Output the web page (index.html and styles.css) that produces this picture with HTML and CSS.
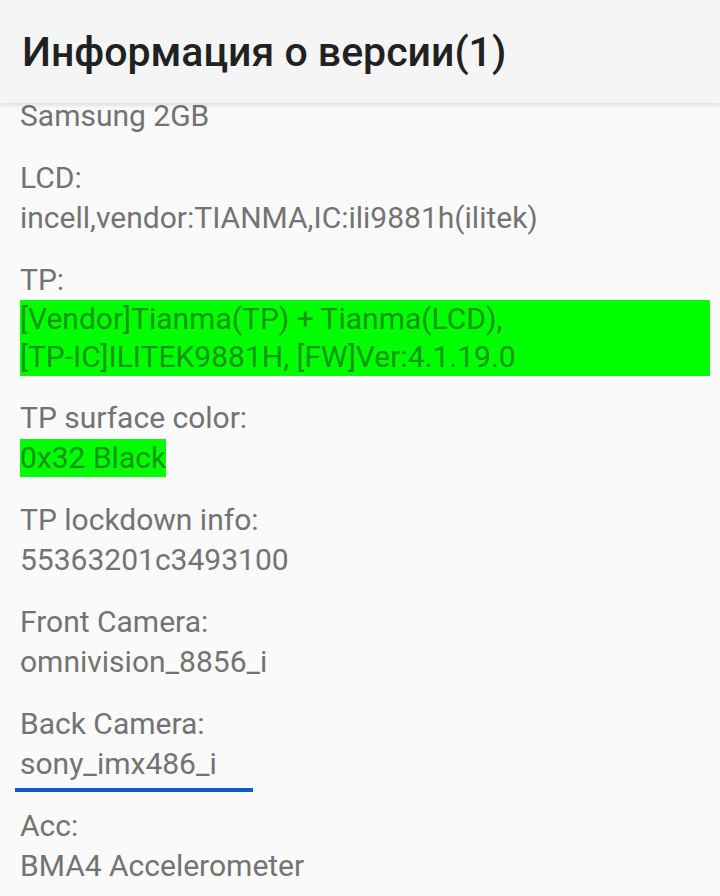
FILE: index.html
```html
<!DOCTYPE html>
<html lang="ru">
<head>
<meta charset="utf-8">
<title>Информация о версии</title>
<link rel="stylesheet" href="styles.css">
</head>
<body>
<header class="appbar">
  <h1 class="appbar-title">Информация о версии(1)</h1>
</header>
<main class="info-list">
  <div class="item">
    <div class="value">Samsung 2GB</div>
  </div>
  <div class="item">
    <div class="label">LCD:</div>
    <div class="value">incell,vendor:TIANMA,IC:ili9881h(ilitek)</div>
  </div>
  <div class="item">
    <div class="label">TP:</div>
    <div class="value value-hl value-block">[Vendor]Tianma(TP) + Tianma(LCD),<br>[TP-IC]ILITEK9881H, [FW]Ver:4.1.19.0</div>
  </div>
  <div class="item">
    <div class="label">TP surface color:</div>
    <div class="value"><span class="value-hl">0x32 Black</span></div>
  </div>
  <div class="item">
    <div class="label">TP lockdown info:</div>
    <div class="value">55363201c3493100</div>
  </div>
  <div class="item">
    <div class="label">Front Camera:</div>
    <div class="value">omnivision_8856_i</div>
  </div>
  <div class="item">
    <div class="label">Back Camera:</div>
    <div class="value"><span class="value-focus">sony_imx486_i</span></div>
  </div>
  <div class="item">
    <div class="label">Acc:</div>
    <div class="value">BMA4 Accelerometer</div>
  </div>
</main>
</body>
</html>
```

FILE: styles.css
```css
html, body {
  margin: 0;
  padding: 0;
}

body {
  width: 720px;
  height: 896px;
  overflow: hidden;
  background: #fafafa;
  font-family: Roboto, "Noto Sans", "Liberation Sans", sans-serif;
}

.appbar {
  position: relative;
  z-index: 2;
  height: 103px;
  background: #f5f5f5;
  box-shadow: 0 2px 5px rgba(0, 0, 0, 0.13);
  display: flex;
  align-items: center;
  padding-left: 22px;
}

.appbar-title {
  margin: 0;
  font-size: 41px;
  font-weight: 500;
  color: #212121;
  letter-spacing: 0;
}

.info-list {
  margin-top: -7px;
  padding: 0 10px 0 20px;
  display: flex;
  flex-direction: column;
  gap: 22px;
}

.item {
  display: flex;
  flex-direction: column;
  align-items: flex-start;
}

.label,
.value {
  font-size: 30px;
  line-height: 40px;
  color: #737373;
}

.value-hl {
  background: #00ff00;
  color: #149614;
  display: inline-block;
  line-height: 38px;
}

.value-block {
  align-self: stretch;
}

.value-focus {
  position: relative;
  display: inline-block;
}

.value-focus::after {
  content: "";
  position: absolute;
  left: -5px;
  width: 238px;
  bottom: -8px;
  height: 4px;
  background: #0b5bc7;
}
```
